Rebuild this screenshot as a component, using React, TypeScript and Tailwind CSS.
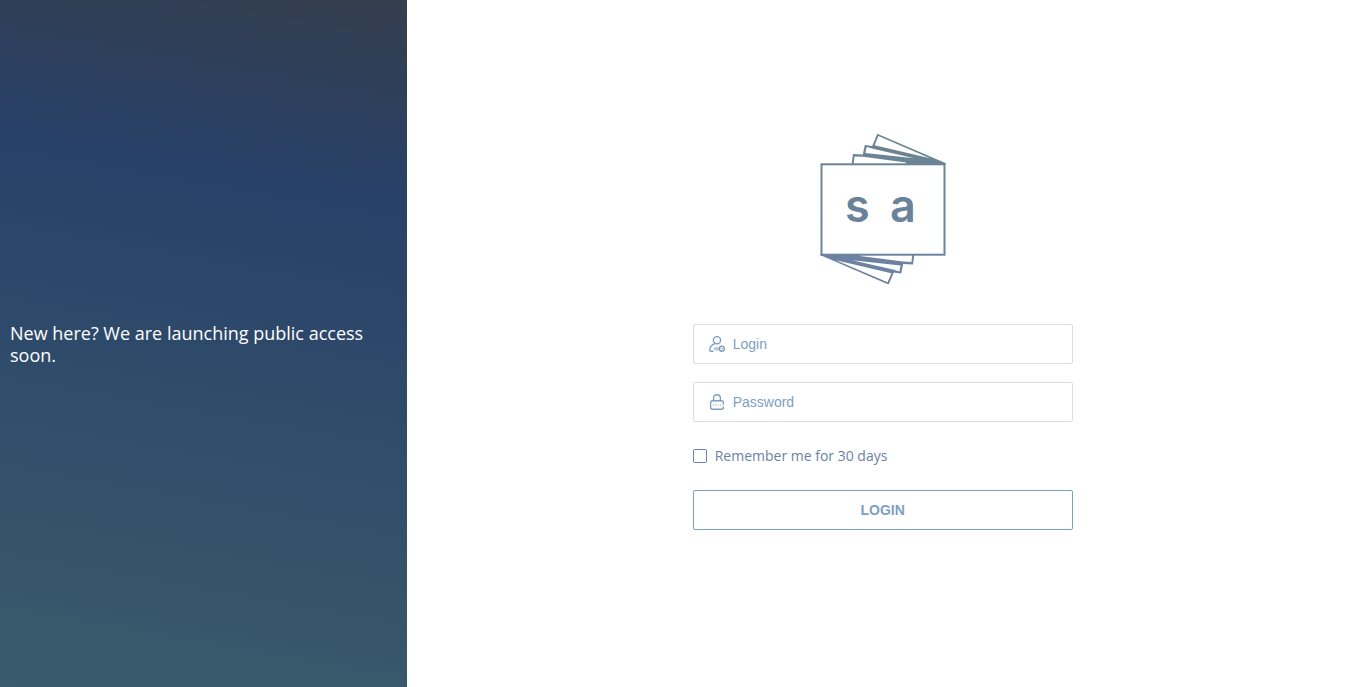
import { useState } from "react";

const PAGES = "M57.3 -.2L126 29.3L125 31H31.5L33 20L42.8 20.5L44.8 11L52.2 12Z";
const PAGE_FACES = "M58.4 2.1L110 24.2L54.6 11.2ZM46.6 13L53 14.8L94 24.2L45.4 18.9ZM34.6 22.4L43 22.8L86 28.4V30H33.6Z";

function Logo() {
  return (
    <svg className="h-[150px] w-[126px]" viewBox="0 0 126 150" role="img" aria-label="sa">
      <defs>
        <linearGradient id="ink" x1="0" y1="0" x2="0" y2="150" gradientUnits="userSpaceOnUse">
          <stop offset="0" stopColor="#6b8494" />
          <stop offset="1" stopColor="#6b82a3" />
        </linearGradient>
      </defs>
      <path fill="#6b8494" d={PAGES} />
      <path fill="#fff" d={PAGE_FACES} />
      <g transform="rotate(180 63 75.2)">
        <path fill="#6b82a0" d={PAGES} />
        <path fill="#fff" d={PAGE_FACES} />
      </g>
      <rect x="1.5" y="30.3" width="123" height="90.4" fill="#fff" stroke="url(#ink)" strokeWidth="2" />
      <g fill="#6b829b" fontFamily="Inter, sans-serif" fontSize="45" fontWeight="600">
        <text x="25" y="88">s</text>
        <text x="70" y="88">a</text>
      </g>
    </svg>
  );
}

function UserIcon() {
  return (
    <svg className="size-4 shrink-0" viewBox="0 0 16 16" fill="none" stroke="#7d9fc3" strokeWidth="1.4" strokeLinecap="round" aria-hidden="true">
      <circle cx="8" cy="4.2" r="3.6" />
      <path d="M5.8 7.6C2.2 9 .7 11.4.7 14.2Q.7 15.3 1.8 15.3H4" />
      <circle cx="12.9" cy="12.8" r="2.5" />
      <path d="M10.4 12H6.2L5.3 13L6.4 14L7.4 13.3L8.4 14L9.3 13.3H10.5M12.6 12.8H13.4" strokeWidth="1" />
    </svg>
  );
}

function LockIcon() {
  return (
    <svg className="size-4 shrink-0" viewBox="0 0 16 16" fill="none" stroke="#7d9fc3" strokeWidth="1.4" strokeLinecap="round" aria-hidden="true">
      <path d="M4.6 6.7V4C4.6 2 6 .7 8 .7S11.4 2 11.4 4V6.7" />
      <path d="M14.4 10V8.7Q14.4 6.7 12.4 6.7H3.6Q1.6 6.7 1.6 8.7V13.3Q1.6 15.3 3.6 15.3H12.4Q14.4 15.3 14.4 13.3V12.8" />
      <path d="M4.2 11H4.3M6.7 11H6.8M9.2 11H9.3M11.7 11H11.8" strokeWidth="1.2" />
    </svg>
  );
}

export default function App() {
  const [remember, setRemember] = useState(false);
  const field = "flex h-10 items-center gap-2 rounded-xs border border-[#dadde5] px-[15px] focus-within:border-[#7d9fc3]";
  const input = "min-w-0 flex-1 bg-transparent font-['Liberation_Sans',sans-serif] text-sm text-[#6b82a3] outline-none placeholder:text-[#7d9fc3]";

  return (
    <div className="flex min-h-screen bg-white font-['Open_Sans',sans-serif]">
      <aside className="flex w-[30%] items-center bg-[linear-gradient(190deg,#343e4e_0%,#284169_27%,#3a5b6c_100%)] px-2.5">
        <p className="text-lg/[22px] text-white">New here? We are launching public access soon.</p>
      </aside>
      <main className="flex flex-1 items-center justify-center p-6">
        <form className="flex w-full max-w-[380px] flex-col pb-6" onSubmit={(e) => e.preventDefault()}>
          <div className="mb-10 flex justify-center">
            <Logo />
          </div>
          <label className={field}>
            <UserIcon />
            <input className={input} type="text" placeholder="Login" aria-label="Login" />
          </label>
          <label className={`mt-[18px] ${field}`}>
            <LockIcon />
            <input className={input} type="password" placeholder="Password" aria-label="Password" />
          </label>
          <label className="my-6 flex h-5 items-center gap-2 self-start text-sm text-[#6b82a3]">
            <input
              type="checkbox"
              checked={remember}
              onChange={(e) => setRemember(e.target.checked)}
              className="size-3.5 appearance-none rounded-xs border border-[#6b82a3] checked:bg-[#6b82a3]"
            />
            Remember me for 30 days
          </label>
          <button type="submit" className="h-10 rounded-xs border border-[#7d9fc3] font-['Liberation_Sans',sans-serif] text-sm font-bold text-[#7d9fc3]">
            LOGIN
          </button>
        </form>
      </main>
    </div>
  );
}
